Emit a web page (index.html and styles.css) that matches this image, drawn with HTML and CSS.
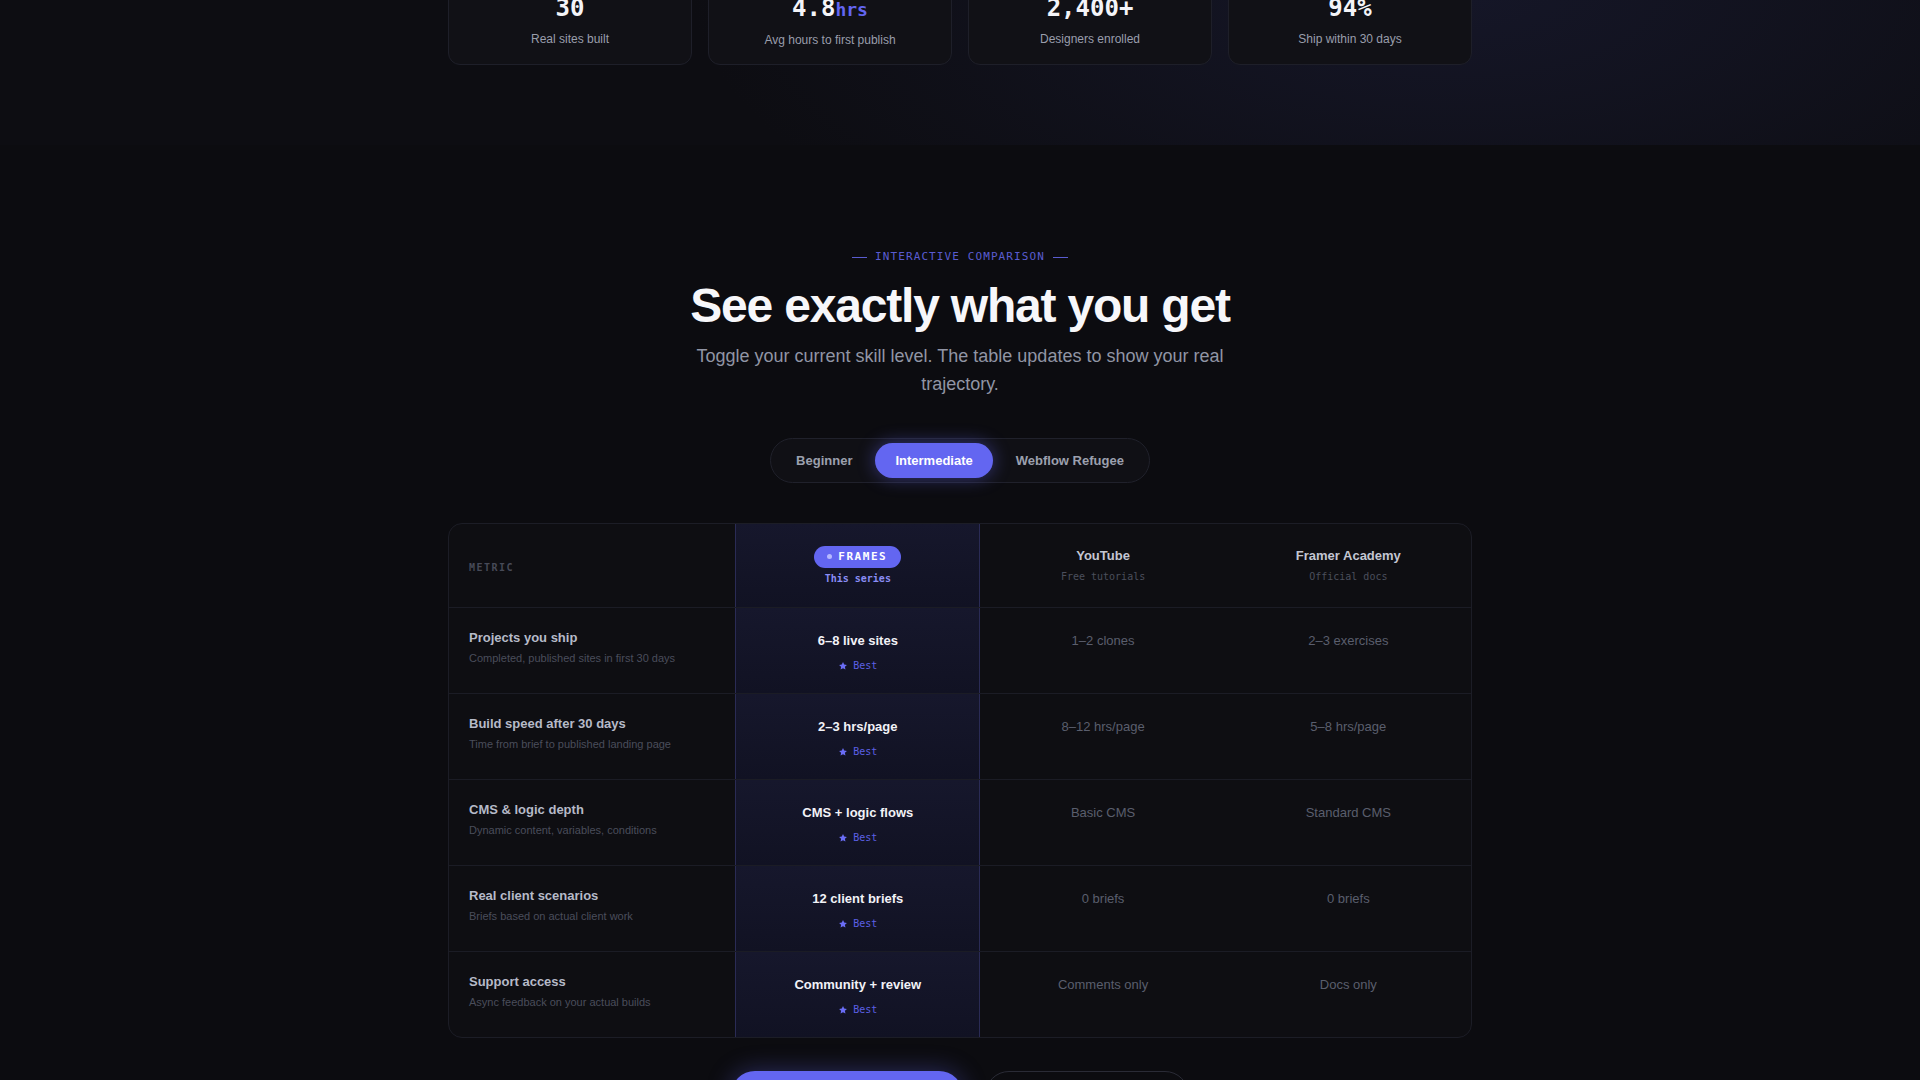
FILE: index.html
```html
<!DOCTYPE html>
<html lang="en">
<head>
<meta charset="utf-8">
<title>See exactly what you get</title>
<link rel="stylesheet" href="styles.css">
</head>
<body>
<div class="page">
  <section class="stats-band">
    <div class="stats">
      <div class="stat">
        <div class="stat-num">30</div>
        <div class="stat-label">Real sites built</div>
      </div>
      <div class="stat">
        <div class="stat-num">4.8<span class="stat-unit">hrs</span></div>
        <div class="stat-label">Avg hours to first publish</div>
      </div>
      <div class="stat">
        <div class="stat-num">2,400+</div>
        <div class="stat-label">Designers enrolled</div>
      </div>
      <div class="stat">
        <div class="stat-num">94%</div>
        <div class="stat-label">Ship within 30 days</div>
      </div>
    </div>
  </section>

  <section class="compare">
    <div class="eyebrow"><span class="dash"></span>INTERACTIVE COMPARISON<span class="dash"></span></div>
    <h2 class="title">See exactly what you get</h2>
    <p class="subtitle">Toggle your current skill level. The table updates to show your real trajectory.</p>

    <div class="toggle">
      <button class="tab">Beginner</button>
      <button class="tab active">Intermediate</button>
      <button class="tab">Webflow Refugee</button>
    </div>

    <div class="table">
      <div class="row head">
        <div class="cell metric-head">METRIC</div>
        <div class="cell hl">
          <span class="badge"><span class="badge-dot"></span>FRAMES</span>
          <span class="hl-sub">This series</span>
        </div>
        <div class="cell col-head">
          <span class="col-name">YouTube</span>
          <span class="col-sub">Free tutorials</span>
        </div>
        <div class="cell col-head">
          <span class="col-name">Framer Academy</span>
          <span class="col-sub">Official docs</span>
        </div>
      </div>

      <div class="row">
        <div class="cell metric"><span class="m-title">Projects you ship</span><span class="m-sub">Completed, published sites in first 30 days</span></div>
        <div class="cell hl"><span class="hl-val">6–8 live sites</span><span class="best"><svg class="star" viewBox="0 0 24 24"><path d="M12 2.5l2.9 6.1 6.6.8-4.9 4.6 1.3 6.6L12 17.3l-5.9 3.3 1.3-6.6-4.9-4.6 6.6-.8z"/></svg>Best</span></div>
        <div class="cell val">1–2 clones</div>
        <div class="cell val">2–3 exercises</div>
      </div>

      <div class="row">
        <div class="cell metric"><span class="m-title">Build speed after 30 days</span><span class="m-sub">Time from brief to published landing page</span></div>
        <div class="cell hl"><span class="hl-val">2–3 hrs/page</span><span class="best"><svg class="star" viewBox="0 0 24 24"><path d="M12 2.5l2.9 6.1 6.6.8-4.9 4.6 1.3 6.6L12 17.3l-5.9 3.3 1.3-6.6-4.9-4.6 6.6-.8z"/></svg>Best</span></div>
        <div class="cell val">8–12 hrs/page</div>
        <div class="cell val">5–8 hrs/page</div>
      </div>

      <div class="row">
        <div class="cell metric"><span class="m-title">CMS &amp; logic depth</span><span class="m-sub">Dynamic content, variables, conditions</span></div>
        <div class="cell hl"><span class="hl-val">CMS + logic flows</span><span class="best"><svg class="star" viewBox="0 0 24 24"><path d="M12 2.5l2.9 6.1 6.6.8-4.9 4.6 1.3 6.6L12 17.3l-5.9 3.3 1.3-6.6-4.9-4.6 6.6-.8z"/></svg>Best</span></div>
        <div class="cell val">Basic CMS</div>
        <div class="cell val">Standard CMS</div>
      </div>

      <div class="row">
        <div class="cell metric"><span class="m-title">Real client scenarios</span><span class="m-sub">Briefs based on actual client work</span></div>
        <div class="cell hl"><span class="hl-val">12 client briefs</span><span class="best"><svg class="star" viewBox="0 0 24 24"><path d="M12 2.5l2.9 6.1 6.6.8-4.9 4.6 1.3 6.6L12 17.3l-5.9 3.3 1.3-6.6-4.9-4.6 6.6-.8z"/></svg>Best</span></div>
        <div class="cell val">0 briefs</div>
        <div class="cell val">0 briefs</div>
      </div>

      <div class="row last">
        <div class="cell metric"><span class="m-title">Support access</span><span class="m-sub">Async feedback on your actual builds</span></div>
        <div class="cell hl"><span class="hl-val">Community + review</span><span class="best"><svg class="star" viewBox="0 0 24 24"><path d="M12 2.5l2.9 6.1 6.6.8-4.9 4.6 1.3 6.6L12 17.3l-5.9 3.3 1.3-6.6-4.9-4.6 6.6-.8z"/></svg>Best</span></div>
        <div class="cell val">Comments only</div>
        <div class="cell val">Docs only</div>
      </div>
    </div>

    <div class="actions">
      <a class="btn primary" href="#">Start building today</a>
      <a class="btn secondary" href="#">See the curriculum</a>
    </div>
  </section>
</div>
</body>
</html>
```

FILE: styles.css
```css
* { box-sizing: border-box; }

html, body {
  margin: 0;
  padding: 0;
  background: #0c0c10;
  color: #e8e8ee;
  font-family: "Liberation Sans", Arial, sans-serif;
}

body { overflow: hidden; }

.page {
  margin-top: -31px;
}

/* ---------- stats band ---------- */
.stats-band {
  padding: 0 0 80px;
  background:
    radial-gradient(ellipse 760px 320px at 1450px 20px, rgba(28, 30, 58, 0.55), rgba(28, 30, 58, 0) 100%),
    #0d0d12;
}

.stats {
  width: 1024px;
  margin: 0 auto;
  display: grid;
  grid-template-columns: repeat(4, 1fr);
  gap: 16px;
}

.stat {
  background: #111116;
  border: 1px solid #1e1f29;
  border-radius: 12px;
  padding: 24px 16px 16px;
  text-align: center;
}

.stat-num {
  font-family: "DejaVu Sans Mono", "Liberation Mono", monospace;
  font-weight: 700;
  font-size: 24px;
  line-height: 29px;
  color: #f4f4f8;
  margin-bottom: 8px;
}

.stat-unit {
  color: #6366f1;
  font-size: 18px;
}

.stat-label {
  font-size: 12px;
  line-height: 16px;
  color: #9a9eac;
}

/* ---------- compare section ---------- */
.compare {
  padding: 104px 0 0;
  display: flex;
  flex-direction: column;
  align-items: center;
}

.eyebrow {
  display: flex;
  align-items: center;
  gap: 8px;
  font-family: "DejaVu Sans Mono", "Liberation Mono", monospace;
  font-size: 11px;
  line-height: 16px;
  letter-spacing: 0.1em;
  color: #5a5cd0;
}

.dash {
  display: block;
  width: 15px;
  height: 1px;
  background: #5a5cd0;
}

.title {
  margin: 14px 0 0;
  font-size: 48px;
  line-height: 53px;
  font-weight: 700;
  letter-spacing: -0.025em;
  color: #f7f7fa;
}

.subtitle {
  margin: 10px 0 0;
  max-width: 560px;
  text-align: center;
  font-size: 18px;
  line-height: 28px;
  color: #9195a5;
}

/* ---------- toggle ---------- */
.toggle {
  margin-top: 40px;
  display: flex;
  gap: 3px;
  padding: 4px 5px;
  border: 1px solid #20212b;
  border-radius: 999px;
  background: #101015;
}

.tab {
  border: 0;
  background: transparent;
  font-family: "Liberation Sans", Arial, sans-serif;
  font-weight: 700;
  font-size: 13px;
  line-height: 15px;
  padding: 10px 20px;
  border-radius: 999px;
  color: #9ca0ae;
  cursor: pointer;
}

.tab.active {
  background: #6366f1;
  color: #ffffff;
  box-shadow: 0 0 18px rgba(99, 102, 241, 0.45);
}

/* ---------- table ---------- */
.table {
  margin-top: 40px;
  width: 1024px;
  border: 1px solid #1c1d26;
  border-radius: 14px;
  background: #0e0e12;
  overflow: hidden;
}

.row {
  display: grid;
  grid-template-columns: 28% 24% 24% 24%;
  border-bottom: 1px solid #1b1c25;
}

.row.last { border-bottom: 0; }

.cell {
  padding: 23px 20px 19px;
  display: flex;
  flex-direction: column;
}

.head .cell {
  padding: 0 20px;
  height: 83px;
  justify-content: center;
}

.metric-head {
  padding-top: 4px !important;
  font-family: "DejaVu Sans Mono", "Liberation Mono", monospace;
  font-size: 10px;
  font-weight: 700;
  letter-spacing: 0.15em;
  color: #474a58;
}

.hl {
  align-items: center;
  background: linear-gradient(180deg, #16172c 0%, #111223 100%);
  border-left: 1px solid #2a2b55;
  border-right: 1px solid #2a2b55;
}

.badge {
  display: flex;
  align-items: center;
  gap: 6px;
  height: 22px;
  padding: 0 14px 0 13px;
  border-radius: 11px;
  background: #6366f1;
  font-family: "DejaVu Sans Mono", "Liberation Mono", monospace;
  font-weight: 700;
  font-size: 11px;
  letter-spacing: 0.14em;
  color: #ffffff;
}

.badge-dot {
  width: 5px;
  height: 5px;
  border-radius: 50%;
  background: #b7b9ff;
}

.hl-sub {
  margin-top: 4px;
  font-family: "DejaVu Sans Mono", "Liberation Mono", monospace;
  font-weight: 700;
  font-size: 10px;
  line-height: 14px;
  color: #8a8df5;
}

.col-head {
  align-items: center;
}

.col-name {
  font-weight: 700;
  font-size: 13px;
  line-height: 16px;
  color: #c3c6d2;
}

.col-sub {
  margin-top: 6px;
  font-family: "DejaVu Sans Mono", "Liberation Mono", monospace;
  font-size: 10px;
  line-height: 14px;
  color: #4b4e5c;
}

.metric { padding-top: 22px; padding-bottom: 19px; }

.m-title {
  font-weight: 700;
  font-size: 13px;
  line-height: 16px;
  color: #b6bac8;
}

.m-sub {
  margin-top: 5px;
  font-size: 11px;
  line-height: 14px;
  color: #4a4d5b;
}

.hl-val {
  font-weight: 700;
  font-size: 13px;
  line-height: 20px;
  color: #f2f2f7;
}

.best {
  margin-top: 7px;
  display: flex;
  align-items: center;
  gap: 5px;
  font-family: "DejaVu Sans Mono", "Liberation Mono", monospace;
  font-size: 10px;
  line-height: 16px;
  color: #5c60e4;
}

.star {
  width: 10px;
  height: 10px;
  fill: #6a6df5;
}

.val {
  align-items: center;
  font-size: 13px;
  line-height: 20px;
  color: #5a5e6d;
}

/* ---------- actions ---------- */
.actions {
  margin-top: 33px;
  display: flex;
  gap: 22px;
}

.btn {
  display: block;
  height: 48px;
  line-height: 48px;
  border-radius: 999px;
  text-decoration: none;
  font-weight: 700;
  font-size: 14px;
  text-align: center;
}

.btn.primary {
  width: 232px;
  background: #6366f1;
  color: #ffffff;
  box-shadow: 0 0 24px rgba(99, 102, 241, 0.35);
}

.btn.secondary {
  width: 204px;
  border: 1px solid #2a2b36;
  color: #c3c6d2;
}
```
